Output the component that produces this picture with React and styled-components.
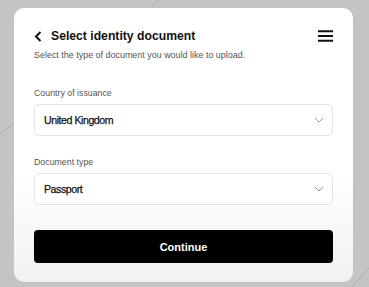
import React from "react";
import styled, { createGlobalStyle } from "styled-components";

const bgLines = encodeURIComponent(
  `<svg xmlns="http://www.w3.org/2000/svg" width="369" height="287"><g fill="none" stroke="#a0a0a0" stroke-width="1" opacity="0.6"><path d="M146 14 L160 -2"/><path d="M0 134 L16 122"/><path d="M352 287 L369 268"/></g></svg>`
);

const GlobalStyle = createGlobalStyle`
  html, body {
    margin: 0;
    padding: 0;
  }
  body {
    width: 369px;
    height: 287px;
    overflow: hidden;
    background: #c4c4c4 url("data:image/svg+xml,${bgLines}") no-repeat;
    font-family: "Liberation Sans", Arial, sans-serif;
  }
`;

const Page = styled.div`
  padding: 8px 16px 5px 14px;
`;

const Card = styled.div`
  width: 339px;
  height: 274px;
  box-sizing: border-box;
  padding: 18px 20px 19px;
  border-radius: 10px;
  background: linear-gradient(180deg, #ffffff 0%, #ffffff 60%, #f1f1f1 100%);
  display: flex;
  flex-direction: column;
`;

const Header = styled.div`
  height: 20px;
  display: flex;
  align-items: center;
  justify-content: space-between;
`;

const TitleGroup = styled.div`
  display: flex;
  align-items: center;
  gap: 9px;
`;

const Title = styled.h1`
  margin: 0;
  font-size: 12.2px;
  font-weight: bold;
  color: #111;
  line-height: 20px;
`;

const IconButton = styled.button`
  border: 0;
  padding: 0;
  background: none;
  display: flex;
  align-items: center;
  justify-content: center;
  color: #111;
`;

const Subtitle = styled.p`
  margin: 3px 0 0;
  font-size: 8.95px;
  line-height: 12px;
  color: #555;
`;

const Field = styled.div`
  display: flex;
  flex-direction: column;
  gap: 5px;
  margin-top: ${(p) => p.$top}px;
`;

const Label = styled.label`
  font-size: 8.8px;
  line-height: 12px;
  color: #555;
`;

const Select = styled.div`
  height: 32px;
  box-sizing: border-box;
  border: 1px solid #e4e4e4;
  border-radius: 5px;
  background: #fff;
  padding: 0 8px 0 9px;
  display: flex;
  align-items: center;
  justify-content: space-between;
  font-size: 10.6px;
  letter-spacing: -0.45px;
  color: #111;
  -webkit-text-stroke: 0.25px #111;
`;

const Button = styled.button`
  margin-top: 25px;
  height: 33px;
  border: 0;
  border-radius: 4px;
  background: #000;
  color: #fff;
  font-family: "Liberation Sans", Arial, sans-serif;
  font-size: 11px;
  font-weight: bold;
`;

const Chevron = () => (
  <svg width="10" height="6" viewBox="0 0 10 6">
    <path d="M1 1 L5 5 L9 1" fill="none" stroke="#999" strokeWidth="1" />
  </svg>
);

const Back = () => (
  <svg width="8" height="11" viewBox="0 0 8 11">
    <path d="M6.5 1 L2 5.5 L6.5 10" fill="none" stroke="#111" strokeWidth="2" />
  </svg>
);

const Menu = () => (
  <svg width="15" height="12" viewBox="0 0 15 12">
    <path d="M0 1.2 H15 M0 6 H15 M0 10.8 H15" stroke="#111" strokeWidth="2" />
  </svg>
);

export default function App() {
  return (
    <Page>
      <GlobalStyle />
      <Card>
        <Header>
          <TitleGroup>
            <IconButton>
              <Back />
            </IconButton>
            <Title>Select identity document</Title>
          </TitleGroup>
          <IconButton>
            <Menu />
          </IconButton>
        </Header>
        <Subtitle>Select the type of document you would like to upload.</Subtitle>
        <Field $top={26}>
          <Label>Country of issuance</Label>
          <Select>
            United Kingdom
            <Chevron />
          </Select>
        </Field>
        <Field $top={20}>
          <Label>Document type</Label>
          <Select>
            Passport
            <Chevron />
          </Select>
        </Field>
        <Button>Continue</Button>
      </Card>
    </Page>
  );
}
